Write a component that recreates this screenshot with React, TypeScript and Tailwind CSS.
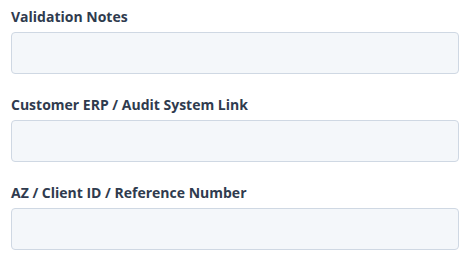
export default function App() {
  const fields = [
    'Validation Notes',
    'Customer ERP / Audit System Link',
    'AZ / Client ID / Reference Number',
  ];

  return (
    <div className="w-[471px] h-[259px] bg-white px-[11px] pt-[4px] font-['Open_Sans',sans-serif]">
      <div className="flex flex-col gap-[18px]">
        {fields.map((label) => (
          <div key={label} className="flex flex-col">
            <label className="text-[14px] leading-[20px] font-bold text-[#2f3b4e] pt-[3px] mb-[5px]">{label}</label>
            <input
              type="text"
              className="w-[448px] h-[42px] rounded-[4px] border border-[#cfd8e3] bg-[#f4f7fa] px-3 outline-none"
            />
          </div>
        ))}
      </div>
    </div>
  );
}
